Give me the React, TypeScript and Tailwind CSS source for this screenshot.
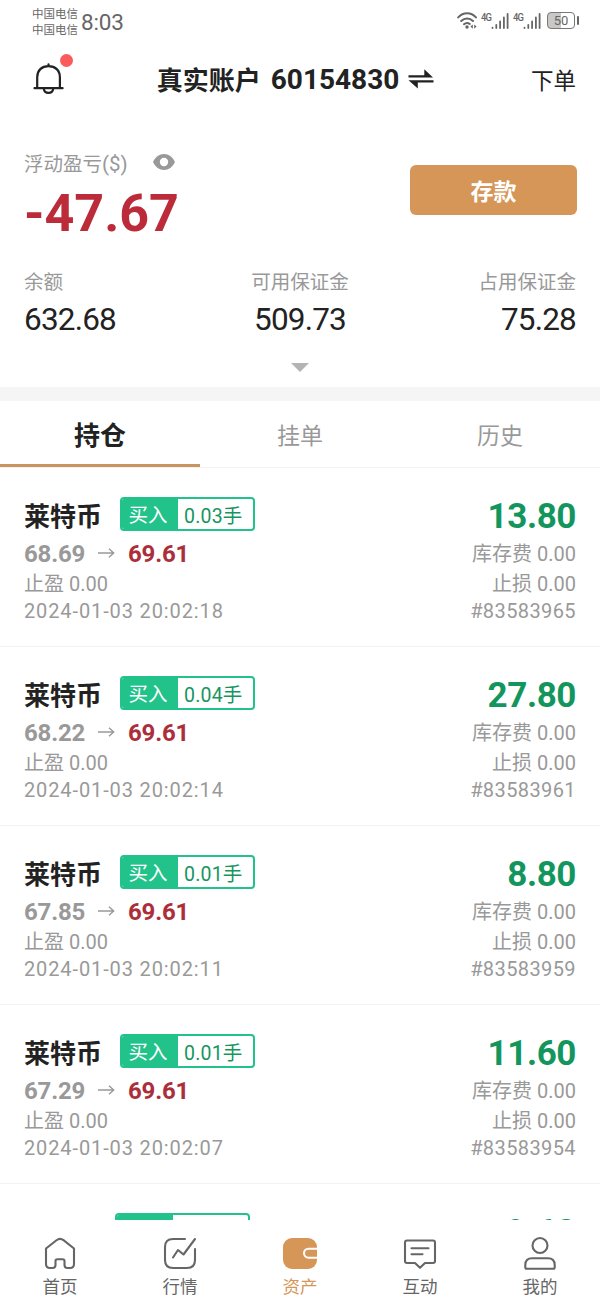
import type { ReactNode } from "react";

type Position = {
  open: string;
  lots: string;
  profit: string;
  time: string;
  id: string;
};

const positions: Position[] = [
  { open: "68.69", lots: "0.03手", profit: "13.80", time: "2024-01-03 20:02:18", id: "#83583965" },
  { open: "68.22", lots: "0.04手", profit: "27.80", time: "2024-01-03 20:02:14", id: "#83583961" },
  { open: "67.85", lots: "0.01手", profit: "8.80", time: "2024-01-03 20:02:11", id: "#83583959" },
  { open: "67.29", lots: "0.01手", profit: "11.60", time: "2024-01-03 20:02:07", id: "#83583954" },
];

function Signal() {
  return (
    <div className="flex h-[18px] items-start">
      <span className="w-[10px] origin-top scale-y-110 font-['Roboto',sans-serif] text-[9.5px] leading-[10px] font-medium tracking-[-0.9px]">4G</span>
      <svg width="18" height="18" viewBox="0 0 18 18" fill="none" stroke="#666" strokeWidth="1.8" strokeLinecap="round">
        <path d="M1.5 15.600v.4M5.300 12.800V16M9.100 9.300V16M12.900 5.500V16M16.600 2V16" />
      </svg>
    </div>
  );
}

function StatusBar() {
  return (
    <div className="flex h-11 items-start justify-between pr-[21px] pl-8 text-[#666]">
      <div className="flex">
        <div className="pt-[5px] text-[11.5px] leading-4">
          <div>中国电信</div>
          <div>中国电信</div>
        </div>
        <div className="ml-[3px] pt-[7px] font-['Roboto',sans-serif] text-[22.5px] leading-[30px] tracking-[-0.2px]">8:03</div>
      </div>
      <div className="flex pt-3">
        <svg className="mr-[3px]" width="21" height="18" viewBox="0 0 21 18" fill="none" stroke="#666" strokeWidth="2" strokeLinecap="round">
          <path d="M1.200 5.400C6.200-.1 14-.1 19 5.400M4.200 9c3.500-3.400 8.300-3.400 11.800 0M7 12.200c1.900-1.600 4-1.600 5.800-.2" />
          <circle cx="10" cy="15" r="1.700" fill="#666" stroke="none" />
          <path d="m15.800 12.400-2.400 2.200 2.400 2.200zM17.200 12.400l2.400 2.200-2.400 2.200z" fill="#666" stroke="none" />
        </svg>
        <Signal />
        <span className="w-[4px]" />
        <Signal />
        <div className="ml-[6px] flex">
          <div className="flex h-[17px] w-7 items-center justify-center rounded-[4px] border-[1.5px] border-[#777] bg-linear-to-r from-[#c8c8c8] from-50% to-white to-50% font-['Roboto',sans-serif] text-[13px] leading-none">
            50
          </div>
          <div className="mt-1 ml-[2px] h-[9px] w-[2px] rounded-full bg-[#666]" />
        </div>
      </div>
    </div>
  );
}

function Header() {
  return (
    <header className="flex h-[70px] items-center justify-between pr-6 pl-8">
      <div className="relative w-[76px]">
        <svg className="mb-[3px]" width="32" height="34" viewBox="0 0 32 34" fill="none" stroke="#222" strokeWidth="2.200" strokeLinecap="round" strokeLinejoin="round">
          <path d="M5.200 27V16.200C5.200 9.400 9.700 5.200 16.500 5.200S27.900 9.400 27.900 16.200V27M2.500 27.200h28.100M16.500 3.300v1.900" />
          <path d="M11.900 28.200c.5 5 8.700 5 9.200 0" />
        </svg>
        <span className="absolute top-[-7px] left-7 size-[13px] rounded-full bg-[#fc5b5c]" />
      </div>
      <div className="flex items-center pl-[5px] font-bold text-[#222]">
        <span className="text-[26px] leading-9">真实账户</span>
        <span className="ml-[10px] pt-[2px] font-['Roboto',sans-serif] text-[28px] leading-9">60154830</span>
        <svg className="mb-px ml-[9px]" width="26" height="20" viewBox="0 0 26 20" fill="#222">
          <path d="M.5 6.200h15.800V.3L25 8.500H.5zM25.500 11.200H.5l9.300 8.200v-5.900h15.700z" />
        </svg>
      </div>
      <span className="w-[98px] text-right text-[22.5px] leading-8 text-[#222]">下单</span>
    </header>
  );
}

function Summary() {
  return (
    <section className="h-[273px] px-6 pt-[33px]">
      <div className="flex items-start justify-between">
        <div>
          <div className="flex h-[31px] items-center text-[19.5px] text-[#999]">
            <span>浮动盈亏</span>
            <span className="w-[27px] pt-[3px] font-['Roboto',sans-serif] text-[20.5px] leading-[28px]">($)</span>
            <svg className="mb-px ml-[24px]" width="22" height="16" viewBox="0 0 22 16" fill="#999">
              <path fillRule="evenodd" d="M0 8C2.500 2.800 6.300 0 11 0s8.500 2.800 11 8c-2.500 5.200-6.300 8-11 8S2.500 13.200 0 8Zm11-4.200a4.200 4.200 0 1 0 0 8.400 4.200 4.200 0 0 0 0-8.400Z" />
            </svg>
          </div>
          <div className="mt-[6px] h-[59px] font-['Roboto',sans-serif] text-[52px] leading-[60px] font-bold text-[#bb2b3a]">-47.67</div>
        </div>
        <button className="mt-[18px] mr-[-1px] h-[50px] w-[167px] rounded-[6px] bg-[#d59658] text-[23px] font-bold text-white">存款</button>
      </div>
      <div className="mt-[23px] grid grid-cols-3 text-[#222]">
        <Balance label="余额" value="632.68" className="text-left" />
        <Balance label="可用保证金" value="509.73" className="text-center" />
        <Balance label="占用保证金" value="75.28" className="text-right" />
      </div>
      <svg className="mx-auto mt-[22px]" width="18" height="9" viewBox="0 0 18 9">
        <path d="M0 0h18L9 9z" fill="#b4b4b4" />
      </svg>
    </section>
  );
}

function Balance({ label, value, className }: { label: string; value: string; className: string }) {
  return (
    <div className={className}>
      <div className="text-[19.5px] leading-[30px] text-[#999]">{label}</div>
      <div className="mt-[3px] font-['Roboto',sans-serif] text-[31.5px] leading-[42px] tracking-[-0.8px]">{value}</div>
    </div>
  );
}

function Tabs() {
  return (
    <nav className="grid h-[67px] grid-cols-3 border-b border-[#f2f2f2] text-center text-[23px] leading-[66px] text-[#999]">
      <div className="h-[66px] border-b-[3px] border-[#c9955f] text-[26px] font-bold text-[#222]">持仓</div>
      <div>挂单</div>
      <div>历史</div>
    </nav>
  );
}

function LotTag({ lots }: { lots: string }) {
  return (
    <div className="flex h-[34px] w-[135px] overflow-hidden rounded-[4px] border-2 border-[#22c28b] text-[19.5px] leading-[30px]">
      <span className="w-14 bg-[#22c28b] pl-[6.5px] text-white">买入</span>
      <span className="flex-1 pt-[2.5px] pl-[6px] font-['Roboto','Noto_Sans_CJK_SC',sans-serif] tracking-[0.2px] text-[#16955f]">{lots}</span>
    </div>
  );
}

function PositionRow({ open, lots, profit, time, id }: Position) {
  return (
    <article className="flex h-[179px] shrink-0 justify-between border-b border-[#f2f2f2] px-6 pt-[29px] font-['Roboto','Noto_Sans_CJK_SC',sans-serif] text-[20px] text-[#999]">
      <div>
        <div className="flex h-[34px] items-center font-['Noto_Sans_CJK_SC',sans-serif]">
          <span className="w-24 pt-[2px] text-[26px] leading-8 font-bold text-[#222]">莱特币</span>
          <LotTag lots={lots} />
        </div>
        <div className="mt-[7px] flex h-[32px] items-center text-[24px] leading-[32px] font-bold">
          <span className="w-[74px] tracking-[-0.2px]">{open}</span>
          <svg className="mr-[13px] mb-[3px]" width="17" height="10" viewBox="0 0 17 10" fill="none" stroke="#999" strokeWidth="1.400">
            <path d="M0 5h15.500M11 .7 15.700 5 11 9.300" />
          </svg>
          <span className="tracking-[-0.2px] text-[#ab2f3b]">69.61</span>
        </div>
        <div className="leading-[28px]">止盈 0.00</div>
        <div className="leading-[27px] tracking-[0.88px]">{time}</div>
      </div>
      <div className="text-right">
        <div className="h-[41px] pt-[3px] text-[35px] leading-[34px] font-bold tracking-[-0.4px] text-[#13965e]">{profit}</div>
        <div className="leading-[32px]">库存费 0.00</div>
        <div className="leading-[28px]">止损 0.00</div>
        <div className="leading-[27px] tracking-[0.4px]">{id}</div>
      </div>
    </article>
  );
}

function NavItem({ label, active, children }: { label: string; active?: boolean; children: ReactNode }) {
  return (
    <div className={active ? "flex flex-col items-center text-[#d59658]" : "flex flex-col items-center text-[#666]"}>
      <svg width="36" height="36" viewBox="0 0 36 36" fill="none" stroke="currentColor" strokeWidth="2.100" strokeLinecap="round" strokeLinejoin="round">
        {children}
      </svg>
      <span className="mt-[3px] text-[17.5px] leading-6">{label}</span>
    </div>
  );
}

function BottomNav() {
  return (
    <nav className="grid h-20 grid-cols-5 bg-white pt-[15px]">
      <NavItem label="首页">
        <path d="M4 13.500 14.500 5.200Q18 2.500 21.500 5.200L32 13.500V29q0 4-4 4h-2.500q-3 0-3-3v-4q0-1.800-1.800-1.800h-5.400Q13.500 24.200 13.500 26v4q0 3-3 3H8q-4 0-4-4z" />
      </NavItem>
      <NavItem label="行情">
        <path d="M23 4H11Q3 4 3 12v13q0 8 8 8h14q8 0 8-8V14M11 22.500l5-7.500 5.500 4.500L33 4" />
      </NavItem>
      <NavItem label="资产" active>
        <rect x="1" y="3" width="34" height="31" rx="9" fill="currentColor" stroke="none" />
        <path d="M35 13.700h-8.500a4.500 4.500 0 0 0 0 9H35" stroke="#fff" strokeLinecap="butt" />
      </NavItem>
      <NavItem label="互动">
        <path d="M5 5.500h26q2 0 2 2V26q0 2-2 2h-8l-5 4.800-5-4.800H5q-2 0-2-2V7.500q0-2 2-2ZM9.500 13.300h17M9.500 19.300h11" />
      </NavItem>
      <NavItem label="我的">
        <circle cx="18" cy="10.500" r="7.500" />
        <path d="M10 23.300h16q6.700 0 6.700 6.700v2.200q0 1.500-1.500 1.500H4.800q-1.500 0-1.500-1.500V30q0-6.700 6.700-6.700Z" />
      </NavItem>
    </nav>
  );
}

export default function App() {
  return (
    <div className="flex h-[1300px] w-[600px] flex-col overflow-hidden bg-white font-['Noto_Sans_CJK_SC',sans-serif]">
      <StatusBar />
      <Header />
      <Summary />
      <div className="h-[14px] shrink-0 bg-[#f5f5f5]" />
      <Tabs />
      <main className="flex min-h-0 flex-1 flex-col overflow-hidden">
        {positions.map((p) => (
          <PositionRow key={p.id} {...p} />
        ))}
        <div className="flex shrink-0 justify-between pt-[29px] pr-6 pl-[115px]">
          <LotTag lots="0.01手" />
          <span className="pt-[3px] font-['Roboto',sans-serif] text-[35px] leading-[34px] font-bold text-[#13965e]">9.68</span>
        </div>
      </main>
      <BottomNav />
    </div>
  );
}
